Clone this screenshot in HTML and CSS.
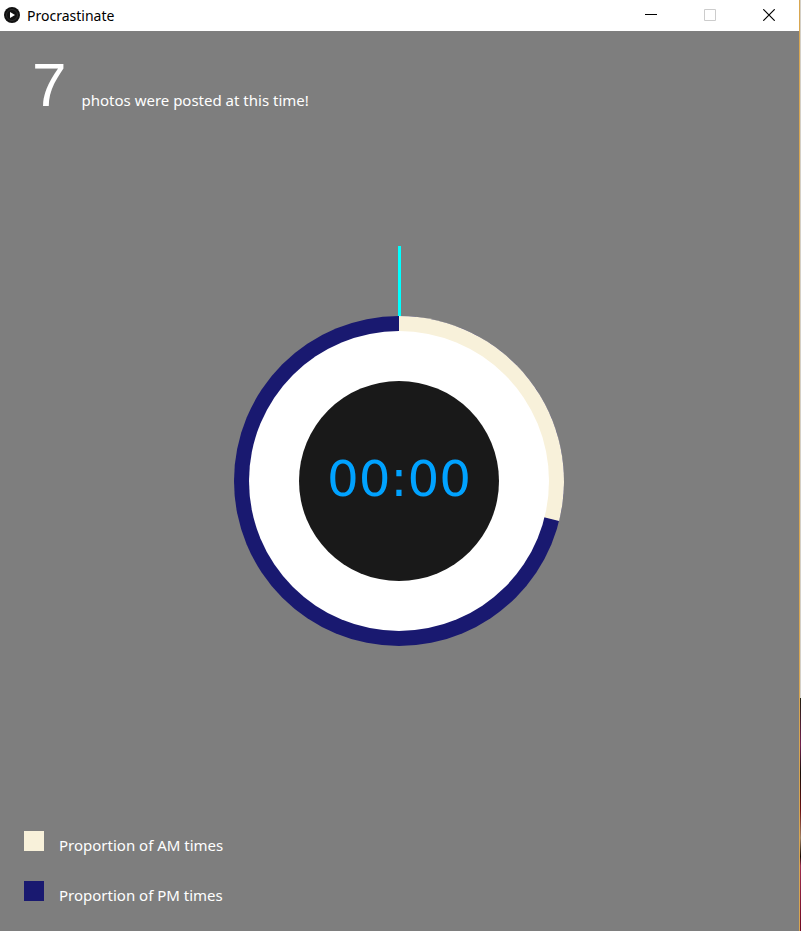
FILE: index.html
```html
<!DOCTYPE html>
<html lang="en">
<head>
<meta charset="utf-8">
<title>Procrastinate</title>
<link rel="stylesheet" href="styles.css">
</head>
<body>
<div class="window">
  <header class="titlebar">
    <svg class="app-icon" viewBox="0 0 16 16" aria-hidden="true">
      <circle cx="8" cy="8" r="8" fill="#111"/>
      <circle cx="8" cy="8" r="5.5" fill="none" stroke="#2c2c2c"/>
      <path d="M6 5l5 3-5 3z" fill="#fff"/>
    </svg>
    <h1 class="title">Procrastinate</h1>
    <div class="controls">
      <button class="control" type="button" aria-label="Minimize">
        <svg viewBox="0 0 12 12"><path d="M0 5.5h12" stroke="#000"/></svg>
      </button>
      <button class="control" type="button" aria-label="Maximize" disabled>
        <svg viewBox="0 0 12 12"><path d="M.5.5h11v11H.5z" stroke="#ccc"/></svg>
      </button>
      <button class="control" type="button" aria-label="Close">
        <svg viewBox="0 0 12 12"><path d="M.3.3l11.4 11.4M11.7.3L.3 11.7" stroke="#000" stroke-width="1.2"/></svg>
      </button>
    </div>
  </header>
  <main class="canvas">
    <p class="summary"><span class="count">7</span><span>photos were posted at this time!</span></p>
    <div class="dial">
      <svg class="rings" viewBox="0 0 330 400" aria-hidden="true">
        <path d="M164 0h3v72h-3z" fill="#0ff"/>
        <circle cx="165" cy="235" r="165" fill="#191970"/>
        <path d="M165 235V70A165 165 0 0 1 325.1 274.9z" fill="#f8f1da"/>
        <circle cx="165" cy="235" r="150" fill="#fff"/>
        <circle cx="165" cy="235" r="100" fill="#191919"/>
      </svg>
      <time class="clock">00:00</time>
    </div>
    <ul class="legend">
      <li><span class="swatch am"></span>Proportion of AM times</li>
      <li><span class="swatch pm"></span>Proportion of PM times</li>
    </ul>
  </main>
</div>
<div class="desktop"></div>
</body>
</html>
```
FILE: styles.css
```css
* { box-sizing: border-box; }

body {
  display: flex;
  min-height: 100vh;
  margin: 0;
  font-family: "Noto Sans", sans-serif;
}

.window {
  display: flex;
  flex: 1;
  flex-direction: column;
  background: #7e7e7e;
}

.desktop {
  width: 2px;
  border-left: 1px solid #d9a750;
  background: linear-gradient(#d4d0c8 75%, #222010 75%, #732150 80%, #181008 83%, #6e1010 87%, #a08060 90%, #180800 92%, #a03050 93%, #700820);
}

.titlebar {
  display: flex;
  align-items: center;
  height: 31px;
  padding: 0 1px 1px 4px;
  background: #fff;
}

.app-icon {
  width: 16px;
  height: 16px;
}

.title {
  margin: 0 0 0 7px;
  font-size: 14px;
  font-weight: 400;
}

.controls {
  display: flex;
  height: 100%;
  margin-left: auto;
}

.control {
  display: grid;
  place-items: center;
  width: 59px;
  padding: 0;
  border: 0;
  background: none;
}

.control svg {
  width: 12px;
  height: 12px;
  fill: none;
}

.canvas {
  display: flex;
  flex: 1;
  flex-direction: column;
  color: #fff;
  font-size: 15px;
}

.summary {
  display: flex;
  align-items: baseline;
  gap: 15px;
  height: 215px;
  margin: 0;
  padding: 14px 32px 0;
}

.count {
  font-family: "Liberation Sans", sans-serif;
  font-size: 62px;
  line-height: 80px;
}

.dial {
  display: grid;
  justify-items: center;
  padding-right: 1px;
}

.rings,
.clock {
  grid-area: 1 / 1;
}

.rings {
  width: 330px;
  height: 400px;
}

.clock {
  margin-top: 200px;
  color: #00a2ff;
  font-family: "DejaVu Sans", sans-serif;
  font-size: 50px;
  line-height: 66px;
}

.legend {
  display: grid;
  gap: 20px;
  margin: auto 0 20px;
  padding: 0 24px;
  list-style: none;
}

.legend li {
  display: flex;
  gap: 15px;
  height: 30px;
  line-height: 28px;
}

.swatch {
  width: 20px;
  height: 20px;
}

.am { background: #f8f1da; }
.pm { background: #191970; }
```
